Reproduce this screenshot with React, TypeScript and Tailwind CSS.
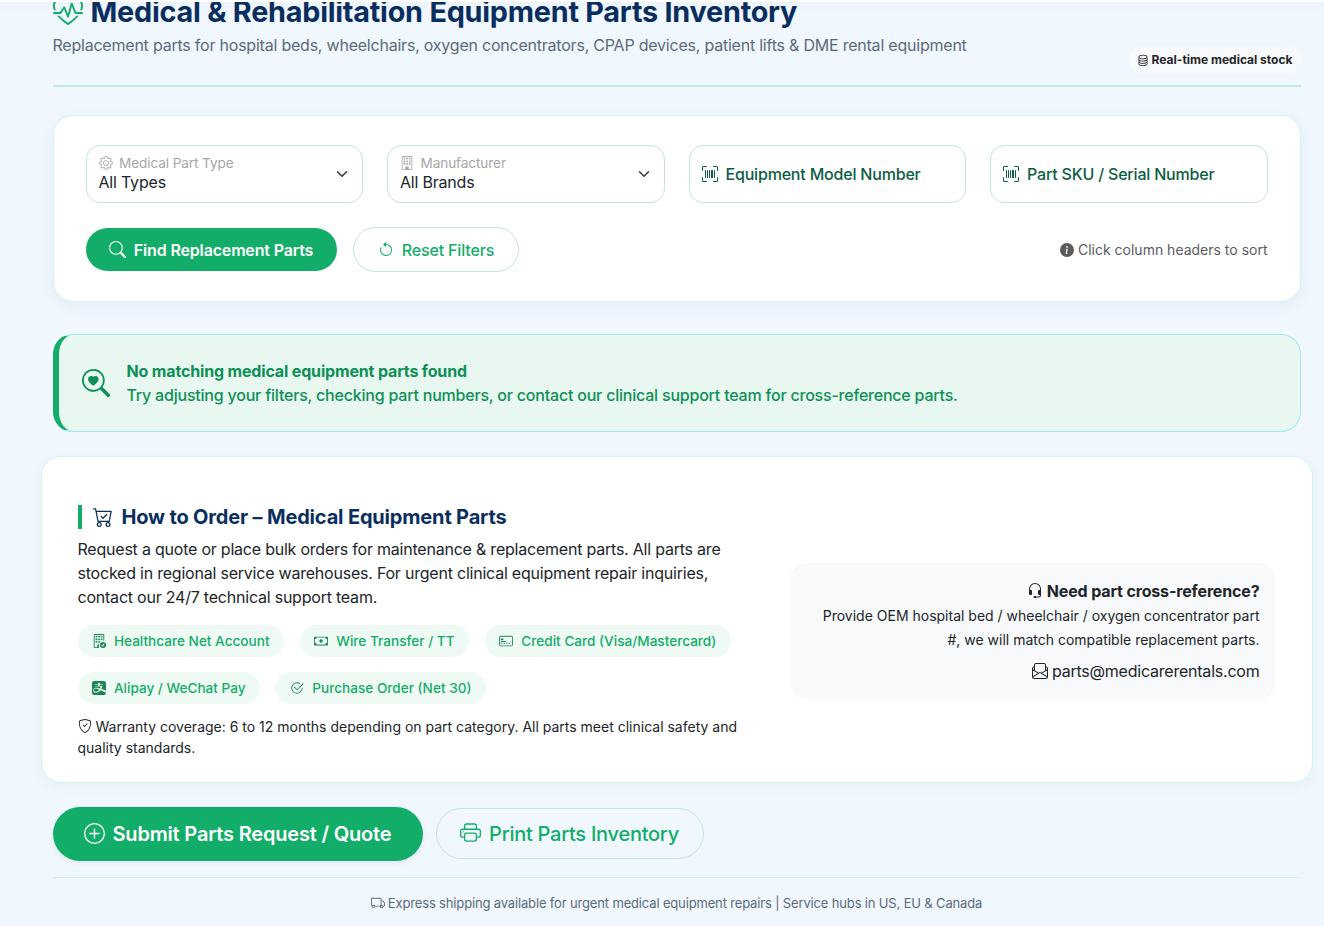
import type { ReactNode } from "react";
import type { IconType } from "react-icons";
import {
  BsAlipay,
  BsArrowCounterclockwise,
  BsBuilding,
  BsBuildingCheck,
  BsCartCheck,
  BsCash,
  BsCheck2Circle,
  BsCreditCard2Front,
  BsDatabase,
  BsEnvelopePaper,
  BsGear,
  BsHeadset,
  BsHeartPulse,
  BsInfoCircleFill,
  BsPlusCircle,
  BsPrinter,
  BsSearch,
  BsSearchHeart,
  BsShieldCheck,
  BsTruck,
  BsUpcScan,
} from "react-icons/bs";

function SelectField({ icon: Icon, label, value }: { icon: IconType; label: string; value: string }) {
  return (
    <div className="flex h-[58px] items-center justify-between rounded-[14px] border border-[#c3e6d8] bg-white px-3">
      <div className="pb-[3px]">
        <div className="flex h-[18px] items-center text-[13.6px] leading-[18px] tracking-[-0.1px] text-[#a6a8a9]">
          <Icon className="mr-[6.5px] size-[14px]" />
          {label}
        </div>
        <div className="h-5 text-base leading-5 tracking-[-0.2px] text-[#212529]">{value}</div>
      </div>
      <svg viewBox="0 0 16 16" className="h-3 w-4" fill="none" stroke="#343a40" strokeWidth="2" strokeLinecap="round" strokeLinejoin="round">
        <path d="m2 5 6 6 6-6" />
      </svg>
    </div>
  );
}

function InputField({ children }: { children: ReactNode }) {
  return (
    <div className="flex h-[58px] items-center rounded-[14px] border border-[#c3e6d8] bg-white px-3 text-base font-medium tracking-[-0.19px] text-[#0b5d43]">
      <BsUpcScan className="mr-2 size-4" />
      {children}
    </div>
  );
}

function Chip({ icon: Icon, children }: { icon: IconType; children: ReactNode }) {
  return (
    <span className="flex h-[31.5px] items-center rounded-full bg-[#effaf5] px-[14.4px] text-[13.6px] font-medium whitespace-nowrap text-[#12ad68]">
      <Icon className="mr-2 size-[14px] text-[#198754]" />
      {children}
    </span>
  );
}

export default function App() {
  return (
    <div className="relative h-[926px] w-[1324px] overflow-hidden bg-[#f0f7ff] font-[Inter,'Liberation_Sans',sans-serif] text-base leading-6 text-[#212529]">
      <div className="absolute inset-x-0 top-0 z-10 h-[2px] bg-white shadow-[0_2px_12px_rgba(0,0,0,0.09)]" />
      <main className="ml-[52.5px] w-[1248px]">
        <header className="flex h-[87px] justify-between border-b-2 border-[#c3e9d9]">
          <div className="-mt-[6px]">
            <h1 className="flex h-[36px] items-center text-[28.8px] leading-9 font-bold tracking-[-0.235px] whitespace-nowrap text-[#0a2f5e]">
              <BsHeartPulse className="mr-2 size-[30px] text-[#12ad68]" />
              Medical &amp; Rehabilitation Equipment Parts Inventory
            </h1>
            <p className="mt-[3px] tracking-[-0.22px] text-[#5c6b7a]">
              Replacement parts for hospital beds, wheelchairs, oxygen concentrators, CPAP devices, patient lifts &amp; DME rental equipment
            </p>
          </div>
          <span className="mt-[46px] flex h-7 items-center gap-[3px] rounded-full bg-[#f8f9fa] px-2 text-xs font-bold">
            <BsDatabase className="size-3" />
            Real-time medical stock
          </span>
        </header>

        <section className="mt-7 h-[187px] rounded-[20px] border border-[#d1f5e6] bg-white px-8 pt-[29px] shadow-[0_4px_14px_rgba(0,40,80,0.06)]">
          <div className="grid grid-cols-4 gap-6">
            <SelectField icon={BsGear} label="Medical Part Type" value="All Types" />
            <SelectField icon={BsBuilding} label="Manufacturer" value="All Brands" />
            <InputField>Equipment Model Number</InputField>
            <InputField>Part SKU / Serial Number</InputField>
          </div>
          <div className="mt-6 flex items-center justify-between">
            <div className="flex items-center gap-4">
              <button className="flex h-[43px] w-[251px] items-center justify-center gap-2 rounded-full bg-[#12ad68] font-semibold tracking-[-0.16px] whitespace-nowrap text-white">
                <BsSearch className="size-[17px]" />
                Find Replacement Parts
              </button>
              <button className="flex h-[45px] w-[166px] items-center justify-center gap-2 rounded-full border border-[#c3e6d8] pl-px font-medium tracking-[-0.16px] whitespace-nowrap text-[#12ad68]">
                <BsArrowCounterclockwise className="size-4" />
                Reset Filters
              </button>
            </div>
            <span className="flex items-center gap-1 text-sm text-[#595c5f]">
              <BsInfoCircleFill className="size-[14px]" />
              Click column headers to sort
            </span>
          </div>
        </section>

        <section className="mt-8 flex h-[98px] items-center rounded-[20px] border border-l-[6px] border-[#9eeaf0] border-l-[#12ad68] bg-[#e8f7f0] pl-[23.5px] font-medium tracking-[-0.21px] text-[#0f8f57]">
          <BsSearchHeart className="mr-[16.5px] size-7" />
          <div>
            <strong className="block font-bold tracking-[-0.16px]">No matching medical equipment parts found</strong>
            Try adjusting your filters, checking part numbers, or contact our clinical support team for cross-reference parts.
          </div>
        </section>

        <section className="-mx-3 mt-6 flex h-[327px] items-center justify-between rounded-[20px] border border-[#d1f5e6] bg-white pr-[37px] pl-9 shadow-[0_4px_14px_rgba(0,40,80,0.03)]">
          <div className="w-[668px] pt-[23px]">
            <h2 className="flex h-6 items-center border-l-4 border-[#12ad68] pl-[11.5px] text-xl leading-6 font-bold tracking-[-0.17px] text-[#0a2f5e]">
              <BsCartCheck className="mr-[8.5px] size-5" />
              How to Order – Medical Equipment Parts
            </h2>
            <p className="mt-2 w-[660px] tracking-[-0.22px]">
              Request a quote or place bulk orders for maintenance &amp; replacement parts. All parts are stocked in regional service warehouses. For urgent clinical equipment repair inquiries, contact our 24/7 technical support team.
            </p>
            <div className="mt-[16.5px] flex flex-wrap gap-x-4 gap-y-[15.5px]">
              <Chip icon={BsBuildingCheck}>Healthcare Net Account</Chip>
              <Chip icon={BsCash}>Wire Transfer / TT</Chip>
              <Chip icon={BsCreditCard2Front}>Credit Card (Visa/Mastercard)</Chip>
              <Chip icon={BsAlipay}>Alipay / WeChat Pay</Chip>
              <Chip icon={BsCheck2Circle}>Purchase Order (Net 30)</Chip>
            </div>
            <p className="mt-3 text-sm leading-[21px]">
              <BsShieldCheck className="mr-1 inline-block size-[14px] align-[-1.75px]" />
              Warranty coverage: 6 to 12 months depending on part category. All parts meet clinical safety and quality standards.
            </p>
          </div>
          <aside className="mt-[23px] h-[136px] w-[485px] rounded-2xl bg-[#f8f9fb] py-4 pr-[15px] pl-4 text-right">
            <div className="flex items-center justify-end gap-1 font-bold tracking-[-0.15px]">
              <BsHeadset className="size-4" />
              Need part cross-reference?
            </div>
            <p className="ml-auto w-[445px] pt-px text-sm leading-6">
              Provide OEM hospital bed / wheelchair / oxygen concentrator part #, we will match compatible replacement parts.
            </p>
            <div className="mt-[7px] flex items-center justify-end gap-1 tracking-[-0.22px]">
              <BsEnvelopePaper className="size-4" />
              parts@medicarerentals.com
            </div>
          </aside>
        </section>

        <div className="mt-6 flex h-[54px] items-start gap-[13px] text-xl">
          <button className="flex h-[54px] w-[370px] items-center justify-center gap-2 rounded-full bg-[#12ad68] font-semibold tracking-[-0.18px] whitespace-nowrap text-white shadow-[0_2px_6px_rgba(0,0,0,0.06)]">
            <BsPlusCircle className="mb-[2px] size-[21px]" />
            Submit Parts Request / Quote
          </button>
          <button className="mt-px flex h-[51px] w-[268px] items-center justify-center gap-2 rounded-full border border-[#c3e6d8] font-medium tracking-[-0.26px] whitespace-nowrap text-[#12ad68]">
            <BsPrinter className="mb-[2px] size-[21px]" />
            Print Parts Inventory
          </button>
        </div>

        <footer className="mt-4 flex items-center justify-center gap-[3px] border-t border-[#d3efe6] pt-[13px] text-[13px] tracking-[-0.155px] text-[#5c6b7a]">
          <BsTruck className="size-[14px]" />
          Express shipping available for urgent medical equipment repairs | Service hubs in US, EU &amp; Canada
        </footer>
      </main>
    </div>
  );
}
